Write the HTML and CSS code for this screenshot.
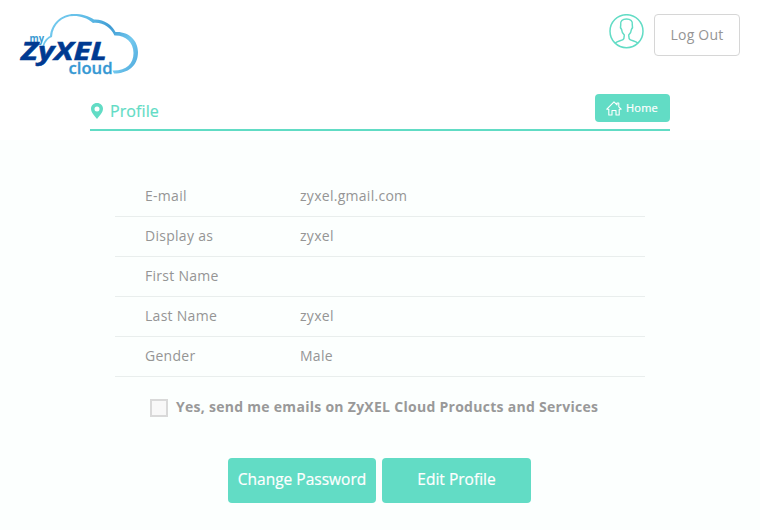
FILE: index.html
```html
<!DOCTYPE html>
<html lang="en">
<head>
<meta charset="utf-8">
<title>myZyXELcloud - Profile</title>
<link rel="stylesheet" href="styles.css">
</head>
<body>
<header class="top">
  <svg class="logo" width="120" height="66" viewBox="19 12 120 66" role="img" aria-label="myZyXELcloud">
    <defs>
      <linearGradient id="sky" gradientUnits="userSpaceOnUse" x1="45" y1="20" x2="137" y2="72">
        <stop offset="0" stop-color="#78cdf0"/>
        <stop offset="0.38" stop-color="#5cb9e5"/>
        <stop offset="0.57" stop-color="#3f9bd3"/>
        <stop offset="0.8" stop-color="#72c8ee"/>
        <stop offset="1" stop-color="#4fa9dc"/>
      </linearGradient>
    </defs>
    <path fill="url(#sky)" d="M42 48C43 42 46 38 50 36C51 24 61 14 74 14C82 14 89 16 94 19.500C104 19 112 25 115.500 32C128 31 138 40 138 52C138 66 128 73.500 114 73.500L112.500 70.500C126 71 133.500 64 133.500 53C133.500 42 125 35 114.500 35.500C110 27 103 22 93 23C87 18 81 16 74 16C62 16 53 24 52 37C47 39 45 43 43.500 48Z"/>
    <text class="logo-my" x="29.500" y="41.500" textLength="14.500" lengthAdjust="spacingAndGlyphs">my</text>
    <text class="logo-name" x="21" y="60.300" textLength="86" lengthAdjust="spacingAndGlyphs">ZyXEL</text>
    <text class="logo-cloud" x="68.500" y="73.500" textLength="44" lengthAdjust="spacingAndGlyphs">cloud</text>
  </svg>
  <div class="account">
    <svg class="avatar" width="36" height="36" viewBox="0 0 36 36" fill="none" stroke="#62dcc5" stroke-width="1.500">
      <circle cx="17.500" cy="17.200" r="16.500"/>
      <path d="M6.200 29C8.500 27 12 26.800 14 25.600C15 25 15.200 24 15.200 22V20.800C13.200 19.500 12.800 17.500 12.600 15.500C11.300 14 11.200 12.500 11.700 11C11 7 13.500 5 17.500 5S24 7 23.300 11C23.800 12.500 23.700 14 22.400 15.500C22.200 17.500 21.800 19.500 19.800 20.800V22C19.800 24 20 25 21 25.600C23 26.800 26.500 27 28.800 29"/>
    </svg>
    <button class="logout">Log Out</button>
  </div>
</header>
<div class="bar">
  <div class="heading">
    <h1 class="title">
      <svg class="pin" width="12" height="16" viewBox="0 0 12 16"><path fill="#62dcc5" fill-rule="evenodd" d="M6 0C2.500 0 0 2.500 0 5.800C0 9.500 3.500 12.500 6 16C8.500 12.500 12 9.500 12 5.800C12 2.500 9.500 0 6 0ZM6 3.500A2.500 2.500 0 1 1 6 8.500A2.500 2.500 0 1 1 6 3.500Z"/></svg>
      <span>Profile</span>
    </h1>
    <button class="home">
      <svg width="16" height="15" viewBox="0 0 16 15" fill="none" stroke="#fff" stroke-width="1.100" stroke-linejoin="round" stroke-linecap="round"><path d="M2.800 8.200H.8L8 .9L11 3.900V2H12.800V5.800L15.200 8.200H13.200V14H10V9.500H6V14H2.800Z"/></svg>
      <span>Home</span>
    </button>
  </div>
</div>
<main class="content">
  <dl class="details">
    <div class="row"><dt>E-mail</dt><dd>zyxel.gmail.com</dd></div>
    <div class="row"><dt>Display as</dt><dd>zyxel</dd></div>
    <div class="row"><dt>First Name</dt><dd></dd></div>
    <div class="row"><dt>Last Name</dt><dd>zyxel</dd></div>
    <div class="row"><dt>Gender</dt><dd>Male</dd></div>
  </dl>
  <label class="consent"><input class="check" type="checkbox"><span>Yes, send me emails on ZyXEL Cloud Products and Services</span></label>
  <div class="actions">
    <button class="action password">Change Password</button>
    <button class="action edit">Edit Profile</button>
  </div>
</main>
</body>
</html>
```
FILE: styles.css
```css
* { box-sizing: border-box; }
body { margin: 0; background: #fff; color: #959595; font: 14px/20px "Open Sans", "Noto Sans", sans-serif; }
button { font-family: inherit; padding: 0 0 2px; border: 0; white-space: nowrap; }
.top { height: 94px; padding: 12px 20px 0 19px; display: flex; justify-content: space-between; align-items: flex-start; }
.logo { display: block; }
.logo-my { font-size: 10px; font-weight: 700; fill: #399ad2; }
.logo-name { font-size: 24.5px; font-weight: 700; font-style: italic; fill: #003a91; stroke: #003a91; stroke-width: .5px; }
.logo-cloud { font-size: 16px; font-weight: 600; fill: #3698d3; stroke: #3698d3; stroke-width: .3px; }
.account { display: flex; gap: 9px; padding-top: 2px; }
.avatar { display: block; }
.logout { width: 86px; height: 42px; border: 1px solid #d6d6d6; border-radius: 4px; background: #fff; color: #959595; font-size: 14px; letter-spacing: .25px; }
.bar { height: 46px; }
.heading { width: 580px; height: 37px; margin: 0 auto; border-bottom: 2px solid #62dcc5; display: flex; justify-content: space-between; align-items: flex-start; }
.title { margin: 6px 0 0 1px; display: flex; align-items: center; gap: 7px; color: #62dcc5; font-size: 16px; line-height: 22px; font-weight: 400; letter-spacing: .1px; -webkit-text-stroke: .2px currentColor; }
.pin { display: block; }
.home { width: 75px; height: 28px; padding: 0 1px 0 0; border-radius: 4px; background: #62dcc5; color: #fff; display: flex; align-items: center; justify-content: center; gap: 4px; font-size: 11px; letter-spacing: .25px; -webkit-text-stroke: .2px currentColor; }
.home span { padding-bottom: 2px; }
.content { height: 390px; padding-top: 37px; background: #fcfffe; }
.details { width: 530px; margin: 0 auto; }
.row { height: 40px; display: grid; grid-template-columns: 155px 1fr; padding: 9px 0 0 30px; border-bottom: 1px solid #e9eeed; letter-spacing: .28px; }
.row dd { margin: 0; }
.consent { display: flex; align-items: center; gap: 8px; margin: 20px 0 0 150px; color: #999; font-weight: 700; letter-spacing: .28px; }
.check { appearance: none; width: 18px; height: 18px; margin: 2px 0 0; border: 2px solid #d9d9d9; background: #f8f8f8; }
.actions { display: flex; gap: 6px; margin: 41px 0 0 228px; }
.action { height: 45px; padding-bottom: 3px; border-radius: 4px; background: #62dcc5; color: #fff; font-size: 15.5px; -webkit-text-stroke: .2px currentColor; }
.password { width: 148px; }
.edit { width: 149px; }
```
